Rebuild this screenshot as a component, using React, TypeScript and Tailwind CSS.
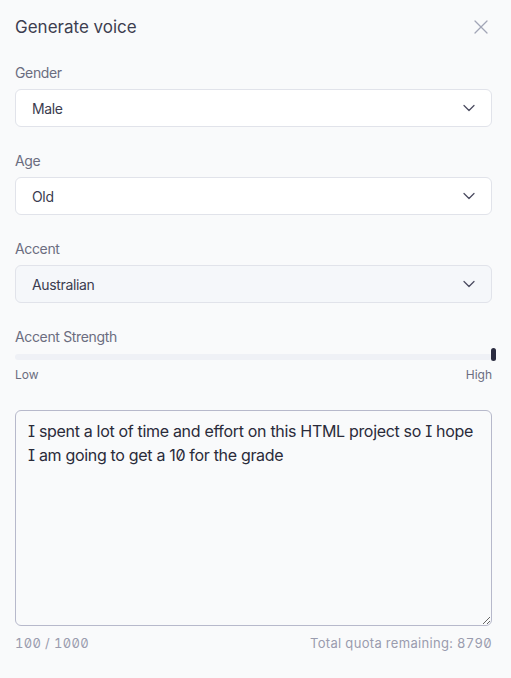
import { X, ChevronDown } from "lucide-react";

const fields = [
  { label: "Gender", value: "Male", active: false },
  { label: "Age", value: "Old", active: false },
  { label: "Accent", value: "Australian", active: true },
];

const SelectField = ({
  label,
  value,
  active,
}: {
  label: string;
  value: string;
  active: boolean;
}) => (
  <div className="flex flex-col">
    <label className="text-[14px] leading-5 tracking-tight text-[#6b6d80] mb-1.5">{label}</label>
    <button
      type="button"
      className={`flex items-center justify-between h-[38px] pl-4 pr-3 rounded-md border border-[#e1e3ea] text-left ${
        active ? "bg-[#f5f7fa]" : "bg-white"
      }`}
    >
      <span className="text-[14px] tracking-tight text-[#3b3c4f]">{value}</span>
      <ChevronDown size={20} strokeWidth={1.5} className="text-[#4b4c60]" />
    </button>
  </div>
);

export default function App() {
  return (
    <div className="min-h-[678px] w-full bg-[#f9fafb] pl-[15px] pr-[19px] pt-[13px] font-['Inter','Noto_Sans',sans-serif] [font-feature-settings:'zero','cv08']">
      <div className="flex items-center justify-between h-7 mb-[22px]">
        <h2 className="text-[17px] leading-7 text-[#3d3e50]">Generate voice</h2>
        <X size={24} strokeWidth={1.25} className="text-[#a2a5b6] -mr-[1px]" />
      </div>

      <div className="flex flex-col gap-6">
        {fields.map((f) => (
          <SelectField key={f.label} {...f} />
        ))}

        <div className="flex flex-col">
          <div className="text-[14px] leading-5 tracking-tight text-[#6b6d80]">Accent Strength</div>
          <div className="relative mt-[7px] h-[6px] rounded-full bg-[#eff1f6]">
            <div className="absolute right-0 -top-[6px] w-[5px] h-[13px] rounded-full bg-[#2b2c40] translate-x-[4px]" />
          </div>
          <div className="flex justify-between mt-[7px] text-[12px] leading-4 text-[#6b6d80]">
            <span>Low</span>
            <span>High</span>
          </div>
        </div>
      </div>

      <div className="mt-[27px] flex flex-col">
        <textarea
          defaultValue="I spent a lot of time and effort on this HTML project so I hope I am going to get a 10 for the grade"
          className="h-[216px] w-full rounded-md border border-[#b7b9cb] bg-[#f9fafb] px-3 py-2 text-[16px] leading-6 tracking-[-0.02em] text-[#2a2b3a] outline-none"
        />
        <div className="flex justify-between mt-[9px] text-[13px] leading-4 tracking-wide tabular-nums text-[#9a9cae]">
          <span>100 / 1000</span>
          <span>Total quota remaining: 8790</span>
        </div>
      </div>
    </div>
  );
}
